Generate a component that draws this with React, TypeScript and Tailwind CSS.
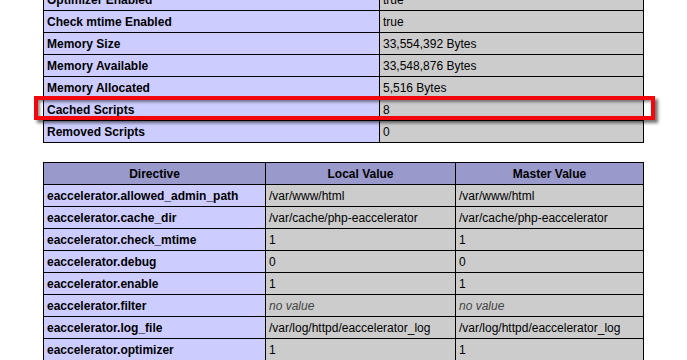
import React from "react";

type Row = { label: string; value: string };

const summary: Row[] = [
  { label: "Optimizer Enabled", value: "true" },
  { label: "Check mtime Enabled", value: "true" },
  { label: "Memory Size", value: "33,554,392 Bytes" },
  { label: "Memory Available", value: "33,548,876 Bytes" },
  { label: "Memory Allocated", value: "5,516 Bytes" },
  { label: "Cached Scripts", value: "8" },
  { label: "Removed Scripts", value: "0" },
];

type Directive = { name: string; local: string | null; master: string | null };

const directives: Directive[] = [
  { name: "eaccelerator.allowed_admin_path", local: "/var/www/html", master: "/var/www/html" },
  { name: "eaccelerator.cache_dir", local: "/var/cache/php-eaccelerator", master: "/var/cache/php-eaccelerator" },
  { name: "eaccelerator.check_mtime", local: "1", master: "1" },
  { name: "eaccelerator.debug", local: "0", master: "0" },
  { name: "eaccelerator.enable", local: "1", master: "1" },
  { name: "eaccelerator.filter", local: null, master: null },
  { name: "eaccelerator.log_file", local: "/var/log/httpd/eaccelerator_log", master: "/var/log/httpd/eaccelerator_log" },
  { name: "eaccelerator.optimizer", local: "1", master: "1" },
];

const cell = "h-[21px] px-[3px] pt-[2px] leading-[19px] whitespace-nowrap overflow-hidden text-[12px]";

function Value({ v }: { v: string | null }) {
  return (
    <div className={`${cell} bg-[#cccccc] text-black`}>
      {v === null ? <i className="text-[#444444]">no value</i> : v}
    </div>
  );
}

export default function App() {
  return (
    <div
      className="relative w-[687px] h-[360px] overflow-hidden bg-white"
      style={{ fontFamily: '"Liberation Sans", Arial, sans-serif' }}
    >
      <div className="pl-[43px]">
        {/* eAccelerator status table */}
        <div className="relative -mt-[12px]">
          <div className="grid w-[601px] grid-cols-[335px_263px] gap-px border border-black bg-black">
            {summary.map((r) => (
              <React.Fragment key={r.label}>
                <div className={`${cell} bg-[#ccccff] font-bold text-black`}>{r.label}</div>
                <Value v={r.value} />
              </React.Fragment>
            ))}
          </div>
          {/* highlight around the Cached Scripts row */}
          <div className="pointer-events-none absolute left-[-9px] top-[108px] h-[24px] w-[621px] border-[4px] border-[#f2070d] shadow-[3px_3px_3px_rgba(0,0,0,0.55),inset_2px_2px_3px_rgba(0,0,0,0.45)]" />
        </div>

        {/* ini directives table */}
        <div className="mt-[19px] grid w-[601px] grid-cols-[221px_189px_187px] gap-px border border-black bg-black">
          {["Directive", "Local Value", "Master Value"].map((h) => (
            <div key={h} className={`${cell} bg-[#9999cc] text-center font-bold text-black`}>
              {h}
            </div>
          ))}
          {directives.map((d) => (
            <React.Fragment key={d.name}>
              <div className={`${cell} bg-[#ccccff] font-bold text-black`}>{d.name}</div>
              <Value v={d.local} />
              <Value v={d.master} />
            </React.Fragment>
          ))}
        </div>
      </div>
    </div>
  );
}
